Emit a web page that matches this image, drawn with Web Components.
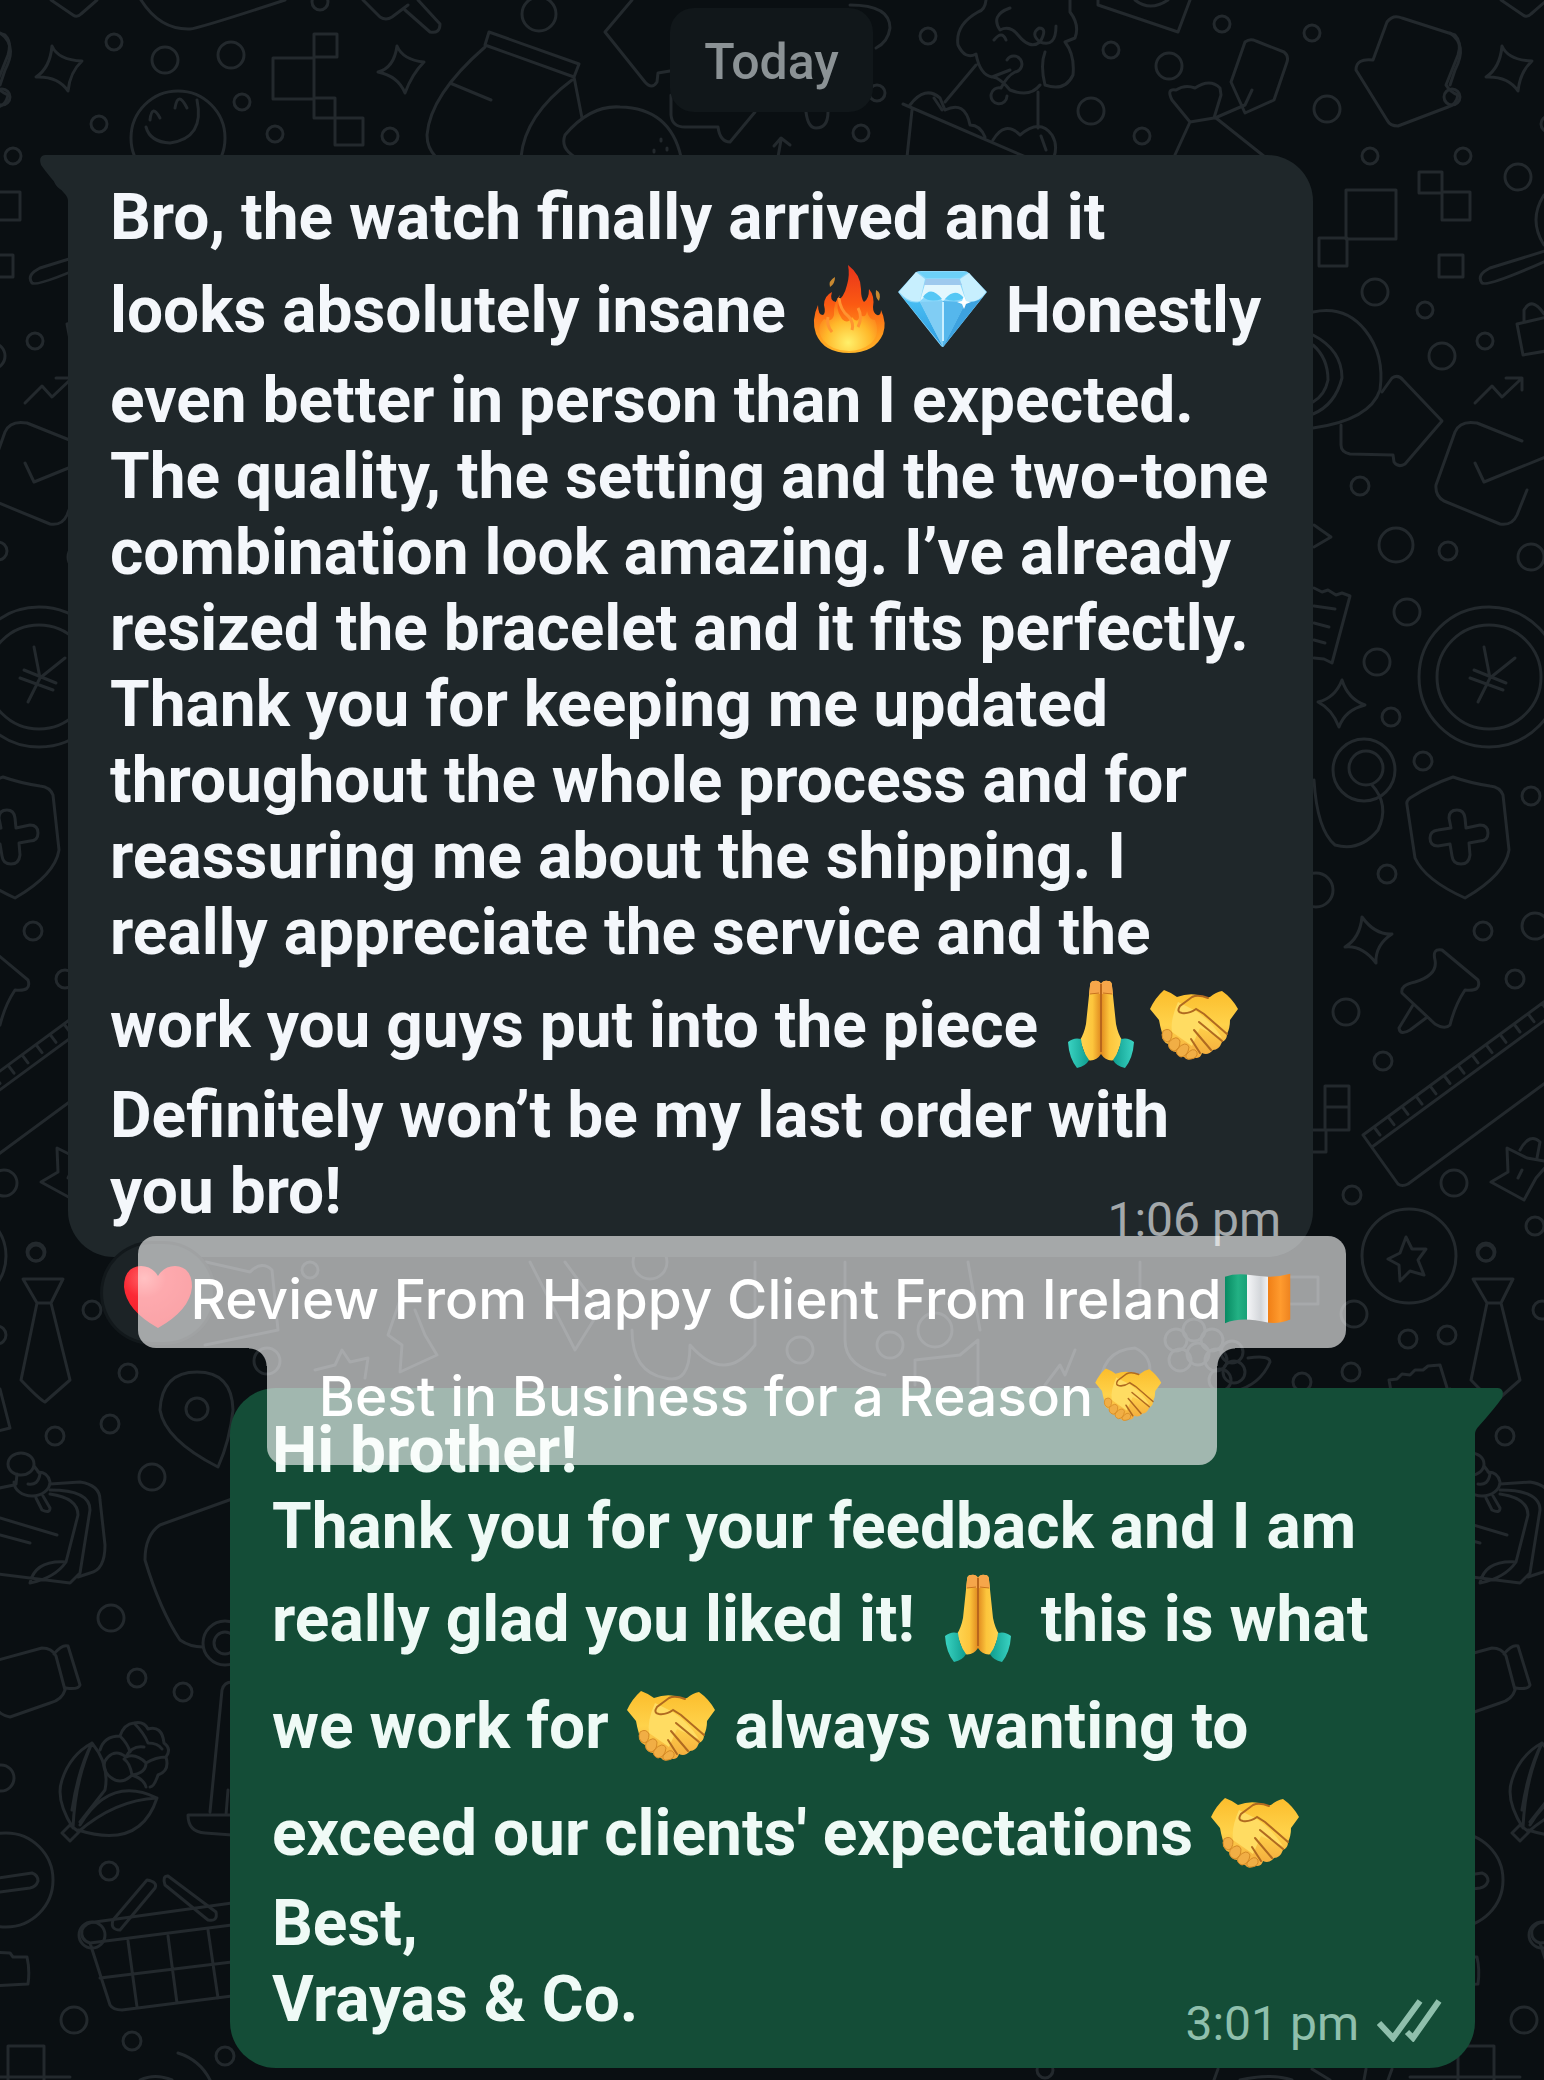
<!DOCTYPE html>
<html lang="en">
<head>
<meta charset="utf-8">
<meta name="viewport" content="width=device-width, initial-scale=1">
<title>Client review chat</title>
<style>
  html { background: #0a0f12; }
  body { margin: 0; font-family: Roboto, "Noto Sans", sans-serif; }
</style>
</head>
<body>
<chat-screen>
  <day-chip>Today</day-chip>
  <chat-bubble kind="in" time="1:06 pm">Bro, the watch finally arrived and it<br>looks absolutely insane <emoji-icon name="fire"></emoji-icon><emoji-icon name="gem"></emoji-icon> Honestly<br>even better in person than I expected.<br>The quality, the setting and the two-tone<br>combination look amazing. I’ve already<br>resized the bracelet and it fits perfectly.<br>Thank you for keeping me updated<br>throughout the whole process and for<br>reassuring me about the shipping. I<br>really appreciate the service and the<br>work you guys put into the piece <emoji-icon name="pray"></emoji-icon><emoji-icon name="shake"></emoji-icon><br>Definitely won’t be my last order with<br>you bro!<reaction-pill slot="reaction"></reaction-pill></chat-bubble>
  <chat-bubble kind="out" time="3:01 pm">Hi brother!<br>Thank you for your feedback and I am<br>really glad you liked it! <emoji-icon name="pray"></emoji-icon> this is what<br>we work for <emoji-icon name="shake"></emoji-icon> always wanting to<br>exceed our clients' expectations <emoji-icon name="shake"></emoji-icon><br>Best,<br>Vrayas &amp; Co.</chat-bubble>
  <story-caption slot="caption">
    <span slot="first">Review From Happy Client From Ireland<emoji-icon name="flag" small></emoji-icon></span>
    <span slot="second">Best in Business for a Reason<emoji-icon name="shake" small></emoji-icon></span>
  </story-caption>
</chat-screen>

<script>
const define = (name, html, setup) => {
  const t = document.createElement('template');
  t.innerHTML = html;
  customElements.define(name, class extends HTMLElement {
    constructor() {
      super();
      this.attachShadow({ mode: 'open' }).append(t.content.cloneNode(true));
    }
    connectedCallback() { if (setup) setup(this, this.shadowRoot); }
  });
};

/* ---------- doodle wallpaper ---------- */
const circles = {
  8: [[320,2],[114,42],[242,102],[99,124],[275,134],[390,136],[13,156],[35,341],[928,36],[1111,50],[1222,24],[1312,33],[861,133],[1142,136],[1370,156],[1425,310],[877,93],[36,1253],[310,1270],[1045,2070],[2,97]],
  9: [[1360,486],[1448,551],[1391,717],[1423,761],[1531,796],[1387,874],[1483,931],[1515,979],[1383,1061],[1352,1195],[1535,1226],[1486,1252],[1408,1339],[1447,1335],[1351,1372],[1302,1382],[92,1310],[128,1373],[110,1424],[55,1436],[137,1678],[183,1692],[109,1871],[132,2041],[225,2056]],
  13: [[165,60],[231,55],[1169,66],[1091,111],[1327,109],[1518,177],[1375,292],[1442,356],[1531,557],[1407,612],[1377,662],[1535,926],[1346,1012],[1454,1183],[1354,1314],[152,1477],[111,1618],[74,2020],[267,1361],[1,1778],[800,1350],[890,1345],[92,1935]],
  17: [[539,14],[1396,545],[1316,890],[1366,768],[935,1330],[650,1262]],
  47: [[178,138],[1409,1256],[6,1880]],
  70: [[1489,677]], 52: [[1489,677]], 31: [[1364,770]], 22: [[225,1643]], 11: [[225,1643],[197,1409],[1176,1340],[1194,1330],[1212,1340],[1180,1360],[1198,1354],[1216,1360],[1232,1352],[1220,1380],[1234,1372]]
};
const dots = Object.entries(circles).map(([r, list]) =>
  list.map(([x, y]) => `<circle cx="${x}" cy="${y}" r="${r}"/>`).join('')).join('');
let ticks = '';
for (let i = 0; i < 16; i++) {
  const x = 1374 + i * 14, y = 1127 - i * 10.3;
  ticks += `M${x} ${y}l6 8`;
}
const doodles = [
  'M51 0L73 15Q77 18 81 14L97 0',
  'M141 0Q160 30 190 29Q200 28 285 0',
  'M363 0L380 17Q386 21 392 17L408 5M405 10L430 32Q440 34 440 24L418 0',
  'M632 0L605 32L645 82Q652 90 657 82L658 73L670 71',
  'M52 46Q58 60 82 61Q70 72 68 91Q58 76 36 77Q50 68 52 46ZM397 46Q403 60 424 62Q412 74 405 93Q398 76 378 72Q394 68 397 46Z',
  'M197 100Q205 138 170 143Q150 142 146 127M150 120Q152 103 160 118M175 108Q178 90 187 108',
  'M314 34h23v23h-23zM273 58h41v41h-41zM314 98h21v20h-21zM335 118h28v27h-28z',
  'M485 45L489 32L579 64L574 77ZM485 47Q430 95 427 135Q427 148 436 157M574 77L582 118M572 80Q525 115 521 157M450 83L491 100',
  'M575 157Q560 148 565 135Q590 105 620 107Q670 108 681 157M661 139v2M654 150v2M667 148v2',
  'M671 95V115Q672 127 685 127H718Q720 142 730 142L755 112',
  'M0 33Q18 45 5 70L0 85',
  'M1346 190h50v49h-50zM1319 238h28v28h-28zM1419 172h23v21h-23zM1442 192h28v28h-28zM1439 255h24v22h-24z',
  'M1548 250L1490 268Q1476 275 1482 283Q1488 287 1548 260M1544 195Q1528 220 1544 245',
  'M1475 403L1492 386L1502 397L1520 380M1506 378H1522V390',
  'M850 5Q890 5 890 28Q888 42 876 48M806 112q2 16 10 16q12 0 12 -16M778 157L781 140M774 146L781 138L790 145',
  'M986 0Q985 10 978 12Q955 25 958 45Q965 60 976 54Q980 75 992 77L1010 70M1010 8Q990 15 1000 30Q1010 25 1018 35Q1030 50 1040 42Q1048 28 1039 28Q1030 34 1040 42Q1056 48 1056 26M1070 0V12Q1080 25 1075 38L1065 42Q1075 55 1073 75Q1065 92 1045 85Q1040 65 1045 52M993 77Q1000 78 1010 90Q1030 98 1040 85M976 65L945 102M1038 92V128M1007 60a8 8 0 1 1 8 12q-8 4-14 16a8 8 0 1 0 6 8M994 40q8-10 12 0',
  'M903 104L1028 158M912 110L907 157M910 105Q925 85 940 98L945 110Q965 100 970 125Q980 125 985 137M993 140Q1005 120 1020 135Q1040 118 1052 135Q1058 145 1054 157M934 98l8 12M1041 136l5 14',
  'M1098 0V5L1178 32L1190 0M1135 0Q1150 12 1168 0',
  'M1245 42Q1250 38 1256 41L1284 52Q1289 56 1287 62L1274 100L1245 113L1231 82ZM1252 90L1245 105L1215 118',
  'M1190 122L1172 100Q1166 88 1176 90Q1185 84 1195 88Q1210 78 1220 88L1221 95L1214 118ZM1190 122L1174 157M1216 118L1265 157',
  'M1387 22Q1393 14 1402 18L1455 35Q1462 42 1458 55L1446 85Q1450 92 1458 95Q1456 105 1448 107L1398 126Q1390 126 1387 120L1356 70Q1356 58 1373 60Z',
  'M1517 324L1523 355L1552 350V316ZM1524 322V310Q1532 296 1544 314',
  'M1313 312Q1345 305 1365 330Q1385 355 1380 390Q1370 420 1313 428M1313 335Q1342 350 1342 378Q1335 405 1313 414M1313 345Q1328 358 1328 380Q1325 395 1313 402',
  'M1382 392L1392 378Q1398 374 1403 380L1442 421L1405 464Q1398 468 1394 462L1393 455L1350 454Q1341 452 1341 445V425',
  'M1522 441L1477 423Q1460 420 1455 432L1436 485Q1435 496 1444 501L1500 524Q1512 526 1517 515L1527 490M1475 463L1484 482L1548 456',
  'M1484 647L1490 678L1515 658M1490 678L1478 702M1470 678L1503 690M1474 670L1506 683',
  'M1314 588l8 4l6-2l8 5l6-2l8 3L1332 663L1324 659L1314 658M1314 606L1335 609M1314 623L1329 627M1314 640L1325 643',
  'M1314 525L1331 537L1314 547',
  'M1342 680Q1348 699 1365 705Q1345 710 1339 727Q1332 709 1318 702Q1335 698 1342 680Z',
  'M1372 785Q1390 805 1378 830Q1360 852 1335 845Q1317 830 1314 780',
  'M1453 777Q1430 785 1410 798Q1406 801 1407 805L1415 858Q1425 880 1465 898Q1505 875 1509 850L1503 795Q1500 787 1490 786Q1470 783 1453 777Z',
  'M1449 818q0-8 8-8q7 0 8 8l1 10l14-3q8 0 8 8q0 8-8 8l-11 2l1 12q-1 9-9 9q-8 0-9-8l-2-12l-12 2q-8 0-8-8q0-7 8-8l13-2z',
  'M1362 917Q1375 935 1392 934Q1375 945 1376 963Q1362 945 1345 947Q1360 938 1362 917Z',
  'M1435 960Q1432 948 1442 950L1478 980Q1482 992 1465 990Q1455 1005 1450 1025Q1445 1030 1435 1024L1402 993Q1400 985 1415 982Q1438 975 1435 960ZM1413 1005L1399 1028Q1400 1036 1410 1030L1426 1018',
  'M1590 968L1363 1135L1398 1184Q1402 1187 1408 1184L1590 1050M1372 1147L1590 987' + ticks,
  'M1325 1086h24v44h-24zM1325 1107h24M1312 1130h14v22h-14',
  'M1491 1182L1508 1172L1507 1148L1527 1158L1550 1162L1536 1178L1524 1200ZM1520 1150Q1530 1132 1540 1142L1537 1158M1518 1178L1522 1170',
  'M1406 1237l6 12l14 0l-8 11l6 15l-14-4l-10 10l-1-16l-11-6l12-6z',
  'M1473 1279H1513L1501 1303H1487ZM1487 1303L1471 1380Q1490 1400 1495 1402L1520 1380L1501 1303',
  'M1391 1391L1389 1380l8-1l5-5l8 1l5-5l8 0l5-4l12-1L1448 1391',
  'M1248 1358Q1270 1355 1270 1362Q1260 1385 1235 1391M1100 1391Q1100 1350 1135 1348Q1150 1355 1150 1370',
  'M206 1262L250 1272Q262 1260 272 1270L278 1330L205 1345M400 1300L388 1335L402 1345L400 1372L437 1355L425 1335L415 1310M315 1370L335 1365L342 1350L350 1362L368 1358L365 1378M530 1262L575 1350L600 1310L565 1262M632 1330Q632 1372 665 1378Q690 1385 690 1345Q725 1385 755 1345V1262M845 1262V1340Q845 1368 885 1375M915 1385V1360L960 1355L978 1340V1385M968 1262L980 1330M1045 1385L1060 1365L1065 1375L1075 1350M1140 1262V1300M1290 1277h28v27h-28',
  'M0 1389L10 1428L-10 1433',
  'M218 1467Q165 1440 160 1410Q162 1372 197 1372Q232 1372 233 1410Q230 1440 218 1467Z',
  'M232 1499L160 1525Q145 1535 145 1560Q160 1610 180 1640Q190 1647 203 1647',
  'M232 1682Q224 1682 222 1690L210 1812M228 1790L226 1815M232 1815H188Q188 1832 205 1833L232 1835',
  'M8 1464a13 11 0 1 0 26 0a13 11 0 1 0 -26 0M17 1474L16 1484M34 1466L40 1474M14 1482a18 14 0 0 0 36 0q-2-10-12-10M28 1484q10 2 12-10M36 1498L42 1510Q50 1514 50 1508L43 1496',
  'M-20 1492L14 1485M50 1484L80 1482Q100 1485 100 1500L105 1545Q105 1570 90 1573L78 1577M50 1490Q90 1490 90 1510L80 1573L70 1583L-10 1573M50 1494Q78 1498 78 1515L66 1562M30 1583Q35 1560 66 1562Q55 1578 30 1583M0 1518L57 1535M0 1535L30 1543',
  'M-20 1665L42 1648Q52 1648 56 1656L65 1690Q62 1700 50 1703L10 1717Q0 1715 -4 1708M54 1654Q62 1644 68 1646L80 1685Q78 1690 66 1688',
  'M73 1828Q55 1800 62 1780Q70 1755 92 1743Q75 1780 73 1828M72 1810Q78 1770 92 1743Q110 1765 105 1790L80 1822M78 1830Q140 1850 157 1798Q110 1775 80 1825M78 1832Q115 1800 157 1798M62 1833L70 1841L79 1832L70 1825Z',
  'M100 1750q4-14 20-14q4-12 14-13q10-2 14 6q14-4 16 14q8 6 2 14q4 14-8 18q-4 12-8 12M108 1775q-8-10 0-18q8-8 18 0q6-12 18-10M108 1775q12 12 24 0q-2-12-8-16M132 1775q14-2 14-12q-10-10-20-6M120 1736q8 8 10 16M134 1723q10 10 14 20q10 0 14 6M146 1763q10-6 20-6M132 1775q12 4 14 12',
  'M-16 1880L32 1873Q38 1875 38 1881Q36 1887 30 1888L-16 1894Z',
  'M-10 1952L10 1953L13 1957H27Q30 1970 28 1984L-10 1986',
  'M232 1925L90 1943Q80 1940 82 1930Q86 1922 95 1922L232 1903M90 1943L110 2005Q113 2010 122 2010L232 1996M100 1978L232 1962M128 1941L137 2007M168 1936L177 2003M208 1930L218 1998',
  'M113 1920L147 1880Q158 1882 155 1888L120 1930Q110 1930 113 1920M168 1876L216 1912Q218 1922 208 1920L165 1885Q162 1876 168 1876',
  'M8 2046h36v50h-36zM-40 2077H70M178 2053Q200 2060 210 2080M140 2080Q155 2073 172 2080M1218 2069L1214 2080M1366 2069L1364 2080M1392 2069L1388 2080M1312 2069L1330 2080M1240 2080Q1270 2073 1292 2080'
].map(d => `<path d="${d}"/>`).join('');

define('doodle-wall', `
<style>
  :host { display: block; position: absolute; inset: 0; overflow: hidden; }
  svg { display: block; width: 100%; height: 100%; fill: none; stroke: #23292d; stroke-width: 3; stroke-linecap: round; stroke-linejoin: round; }
</style>
<svg aria-hidden="true"><g id="tile">${dots}${doodles}</g><use href="#tile" x="1450"/><use href="#tile" x="-1450"/></svg>`);

define('chat-screen', `
<style>
  :host { display: block; position: relative; min-height: 100vh; background: #0a0f12; overflow: hidden; }
  main { position: relative; display: flex; flex-direction: column; align-items: stretch; padding: 8px 69px 11px 68px; }
  ::slotted(day-chip) { align-self: center; margin-bottom: 43px; }
</style>
<doodle-wall></doodle-wall>
<main><slot></slot></main>
<slot name="caption"></slot>`);

define('day-chip', `
<style>
  :host { display: block; padding: 26px 34px 22px; border-radius: 24px; background: #11171a; color: #8b9295; font-size: 50px; line-height: 56px; font-weight: 500; }
</style><slot></slot>`);

/* ---------- message bubble ---------- */
define('chat-bubble', `
<style>
  :host { display: grid; position: relative; box-sizing: border-box; padding: 25px 32px 9px 42px; border-radius: 46px; color: #f4f7fb; }
  :host([kind="in"]) { --fill: #1f272a; --meta: #a3a8aa; --tail-room: 18px; background: var(--fill); margin-right: 162px; margin-bottom: 131px; border-top-left-radius: 0; }
  :host([kind="out"]) { --fill: #144d37; --meta: #8fbfac; --tail-room: 14px; background: var(--fill); margin-left: 162px; padding-bottom: 16px; border-top-right-radius: 0; color: #effaf6; }
  p { grid-area: 1 / 1; margin: 0 0 var(--tail-room); font-size: 64px; line-height: 76px; font-weight: 700; }
  footer { grid-area: 1 / 1; align-self: end; justify-self: end; display: flex; align-items: center; gap: 18px; color: var(--meta); font-size: 48px; line-height: 56px; }
  footer svg { display: none; width: 66px; height: 44px; margin-bottom: 8px; fill: none; stroke: currentColor; stroke-width: 6; }
  .tail { position: absolute; top: 0; width: 28px; height: 46px; fill: var(--fill); }
  :host([kind="in"]) .tail { right: 100%; }
  :host([kind="out"]) .tail { left: 100%; transform: scaleX(-1); }
  :host([kind="out"]) footer svg { display: block; }
</style>
<svg class="tail" viewBox="0 0 28 46" aria-hidden="true"><path d="M29 0H5Q-2 1 1 10Q8 20 24 38Q28 42 28 46H29Z"/></svg>
<p><slot></slot></p>
<footer><time></time><svg viewBox="0 0 66 44" role="img" aria-label="Delivered"><path d="M2 25L16 40L43 3M30 34L36 40L62 3"/></svg></footer>
<slot name="reaction"></slot>`,
(el, root) => { root.querySelector('time').textContent = el.getAttribute('time'); });

define('reaction-pill', `
<style>
  :host { display: flex; align-items: center; justify-content: center; position: absolute; left: 35px; bottom: -85px; width: 110px; height: 98px; border-radius: 49px; background: #1c2326; box-shadow: 0 0 0 3px #12181b; }
  svg { width: 70px; height: 64px; margin-top: 8px; }
</style>
<svg viewBox="0 0 70 64" role="img" aria-label="Heart reaction">
  <defs><radialGradient id="h" cx=".3" cy=".2" r=".9"><stop offset="0" stop-color="#ff6468"/><stop offset=".35" stop-color="#fb2a35"/><stop offset="1" stop-color="#f01722"/></radialGradient></defs>
  <path fill="url(#h)" d="M35 11Q29 1 18 1Q1 2 1 22Q3 45 35 63Q67 45 69 22Q69 2 52 1Q41 1 35 11Z"/>
</svg>`);

/* ---------- two-line caption laid over the chat ---------- */
define('story-caption', `
<style>
  :host { position: absolute; top: 1236px; left: 0; right: 60px; display: flex; flex-direction: column; align-items: center; color: #fff; font-family: Inter, sans-serif; font-size: 55px; font-weight: 500; line-height: 68px; white-space: nowrap; --veil: rgba(255, 255, 255, .6); }
  div { position: relative; background: var(--veil); padding: 0 52px; }
  .a { padding-top: 29px; padding-bottom: 15px; border-radius: 18px; }
  .b { padding-top: 14px; padding-bottom: 35px; border-radius: 0 0 18px 18px; }
  .b::before, .b::after { content: ""; position: absolute; top: 0; width: 18px; height: 18px; }
  .b::before { right: 100%; background: radial-gradient(circle at 0 100%, transparent 17px, var(--veil) 18px); }
  .b::after { left: 100%; background: radial-gradient(circle at 100% 100%, transparent 17px, var(--veil) 18px); }
</style>
<div class="a"><slot name="first"></slot></div>
<div class="b"><slot name="second"></slot></div>`);

/* ---------- emoji artwork ---------- */
const art = {
  fire: ['fire', `
  <defs><linearGradient id="a" x1="0" y1="0" x2="0" y2="1"><stop offset="0" stop-color="#e8331b"/><stop offset=".45" stop-color="#fb5a12"/><stop offset=".8" stop-color="#ff9a1c"/><stop offset="1" stop-color="#ffb52a"/></linearGradient>
  <radialGradient id="b" cx=".5" cy=".85" r=".8"><stop offset="0" stop-color="#fff06a"/><stop offset=".5" stop-color="#ffb82a"/><stop offset="1" stop-color="#fb5f12"/></radialGradient></defs>
  <path fill="url(#a)" d="M44 0Q57 10 57 24Q57 34 60 37Q65 34 65 24Q71 31 69 42Q69 48 73 50Q77 51 77 45Q83 58 79 69Q71 88 45 88Q20 88 12 69Q7 55 14 40Q14 50 19 50Q22 48 20 40Q20 31 28 27Q25 36 32 37Q40 33 43 20Q46 10 44 0Z"/>
  <path fill="url(#b)" d="M36 30Q30 43 38 54Q44 60 48 52Q54 60 56 50Q62 54 63 46Q65 55 71 55Q77 70 66 79Q57 86 45 86Q28 86 19 75Q11 63 20 54Q28 58 30 50Q29 38 36 30Z"/>
  <path fill="none" stroke="#ff9430" stroke-width="3" d="M35 33Q36 45 45 52Q50 58 48 65M54 43Q59 52 54 62M24 52Q22 60 28 67"/>
  <path fill="#c98930" d="M31 12Q24 16 26 22Q31 19 31 12ZM72 25Q78 28 75 36Q71 33 72 25Z"/>`],
  gem: ['gem stone', `
  <defs><linearGradient id="a" x1="0" y1="0" x2="0" y2="1"><stop offset="0" stop-color="#4cc3f6"/><stop offset="1" stop-color="#2f9ce0"/></linearGradient></defs>
  <path fill="#8bd8fb" d="M18 7Q20 6 23 6H66Q69 6 71 8L89 27L46 81Q45 83 43 81L0 27Z"/>
  <path fill="url(#a)" d="M1 28Q10 40 22 37L45 82Z"/><path fill="#80cdf4" d="M22 37L45 36V82Z"/><path fill="#55b7ec" d="M45 36L68 37L45 82Z"/><path fill="#3da2df" d="M68 37Q82 38 88 28L45 82Z"/>
  <path fill="#c7effe" d="M18 7L27 14L22 36Q12 39 1 27ZM71 8L62 14L68 36Q80 39 88 27Z"/>
  <path fill="#e2f7fe" d="M27 19H62L68 36Q57 24 45 36Q33 24 22 36Z"/><path fill="#55c7f5" d="M25 32Q33 20 44 34Q32 38 25 32ZM47 34Q57 22 66 33Q57 38 47 34Z"/>
  <path fill="#9ec9ee" d="M28 14H61L64 20H26Z"/><path fill="#6dd1f8" d="M20 7H70L62 13H28Z"/>
  <path fill="#fff" d="M66 31l2 5l5 1l-5 2l-2 5l-2-5l-5-2l5-1z"/><path stroke="#c9efff" stroke-width="2" d="M45 37V76"/>`],
  pray: ['folded hands', `
  <defs><linearGradient id="a" x1="0" x2="1"><stop offset="0" stop-color="#ffd552"/><stop offset=".6" stop-color="#fcc53c"/><stop offset="1" stop-color="#e08a1f"/></linearGradient><linearGradient id="c" x1="0" x2="1"><stop offset="0" stop-color="#3ad3c2"/><stop offset="1" stop-color="#0f9d8f"/></linearGradient>
  <g id="hand"><path fill="url(#a)" d="M45 4Q43 0 38 1Q34 1 34 6L30 44Q28 54 24 60L31 80Q40 82 45 74Z"/><path fill="#f6a64a" d="M45 4Q43 0 38 1Q34 1 34 6L33 14H45Z"/><path fill="none" stroke="#c9741d" d="M34 14L43 13"/><path fill="url(#c)" d="M12 62Q18 57 25 59Q26 71 33 80Q30 86 21 88Q13 78 12 62Z"/></g></defs>
  <use href="#hand"/><use href="#hand" transform="matrix(-1 0 0 1 90 0)"/><path stroke="#b9661c" stroke-width="2" d="M45 4V72"/>`],
  shake: ['handshake', `
  <defs><linearGradient id="a" x1="0" y1="0" x2="0" y2="1"><stop offset="0" stop-color="#fbbd2c"/><stop offset=".5" stop-color="#ffd24a"/><stop offset="1" stop-color="#f3a83c"/></linearGradient></defs>
  <path fill="url(#a)" d="M14 10Q20 12 27 17Q38 13 48 15Q55 18 60 17Q66 12 72 11Q82 18 88 29L80 40Q80 48 77 54Q77 60 72 62Q69 70 63 70Q58 76 52 73Q50 80 43 77Q38 82 34 77Q28 77 26 72Q19 71 18 64Q11 61 12 53Q10 46 9 40L0 29Q5 18 14 10Z"/>
  <path fill="#ffdc62" d="M28 22Q20 40 22 52L42 66L50 48L72 58Q62 42 46 31Z"/>
  <path fill="#f1ae45" stroke="#d48a26" stroke-width="1" d="M13 51Q19 47 22 53Q22 61 17 62Q10 59 13 51ZM19 62Q27 54 30 61Q30 70 24 71Q17 69 19 62ZM27 69Q36 60 39 67Q38 76 31 77Q25 75 27 69ZM36 75Q43 66 47 72Q48 78 41 79Q35 80 36 75Z"/>
  <g fill="none" stroke="#b06a20" stroke-width="2" stroke-linecap="round"><path d="M58 18Q48 14 42 17L30 26Q26 32 32 33Q39 34 46 29L54 34L77 54"/><path d="M49 42L72 61M44 50L61 70M41 59L50 73"/></g>`],
  flag: ['flag of Ireland', `
  <defs><linearGradient id="a" x1="0" x2="1"><stop offset="0" stop-color="#078a62"/><stop offset=".2" stop-color="#23b184"/><stop offset=".34" stop-color="#18a177"/><stop offset=".34" stop-color="#f4f5f7"/><stop offset=".55" stop-color="#d3d6da"/><stop offset=".66" stop-color="#f2f2f4"/><stop offset=".66" stop-color="#f07f16"/><stop offset=".85" stop-color="#ff9b2e"/><stop offset="1" stop-color="#ee8420"/></linearGradient></defs>
  <path fill="url(#a)" d="M1 17Q12 13 28 14Q44 16 58 17Q74 17 88 13V74Q74 80 58 78Q40 74 28 74Q12 74 1 79Z"/>`]
};
const iconTemplate = `
<style>
  :host { display: inline-block; width: 94px; height: 107px; vertical-align: -31px; }
  :host([small]) { width: 72px; height: 60px; vertical-align: -8px; }
  svg { display: block; width: 100%; height: 100%; }
</style>
<svg role="img"></svg>`;
define('emoji-icon', iconTemplate, (el, root) => {
  const svg = root.querySelector('svg');
  const [label, markup] = art[el.getAttribute('name')];
  svg.setAttribute('viewBox', el.hasAttribute('small') ? '-3 4 96 80' : '-2 -9 94 107');
  svg.setAttribute('aria-label', label);
  svg.innerHTML = markup;
});
</script>
</body>
</html>
